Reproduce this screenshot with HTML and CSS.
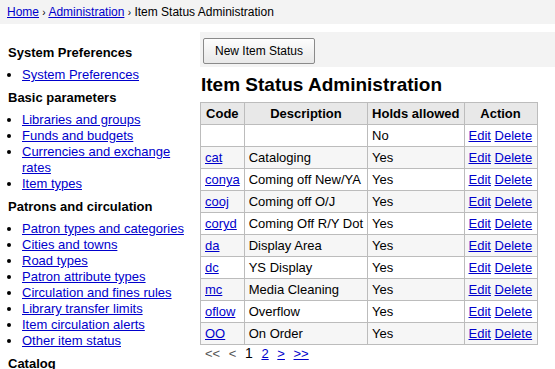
FILE: index.html
```html
<!DOCTYPE html>
<html lang="en">
<head>
    <meta charset="UTF-8">
    <title>Koha &rsaquo; Administration &rsaquo; Item Status Administration</title>
    <link rel="stylesheet" href="styles.css">
</head>
<body>
    <div id="breadcrumbs">
        <a href="#">Home</a> <span class="sep">&rsaquo;</span> <a href="#">Administration</a> <span class="sep">&rsaquo;</span> Item Status Administration
    </div>

    <div class="layout">
        <div class="sidebar">
            <h5>System Preferences</h5>
            <ul>
                <li><a href="#">System Preferences</a></li>
            </ul>
            <h5>Basic parameters</h5>
            <ul>
                <li><a href="#">Libraries and groups</a></li>
                <li><a href="#">Funds and budgets</a></li>
                <li><a href="#">Currencies and exchange rates</a></li>
                <li><a href="#">Item types</a></li>
            </ul>
            <h5>Patrons and circulation</h5>
            <ul>
                <li><a href="#">Patron types and categories</a></li>
                <li><a href="#">Cities and towns</a></li>
                <li><a href="#">Road types</a></li>
                <li><a href="#">Patron attribute types</a></li>
                <li><a href="#">Circulation and fines rules</a></li>
                <li><a href="#">Library transfer limits</a></li>
                <li><a href="#">Item circulation alerts</a></li>
                <li><a href="#">Other item status</a></li>
            </ul>
            <h5>Catalog</h5>
        </div>

        <div class="main">
            <div id="toolbar">
                <button class="new-btn">New Item Status</button>
            </div>

            <h1>Item Status Administration</h1>

            <table class="status-table">
                <tr>
                    <th class="col-code">Code</th>
                    <th class="col-desc">Description</th>
                    <th class="col-holds">Holds allowed</th>
                    <th class="col-action">Action</th>
                </tr>
                <tr>
                    <td></td>
                    <td></td>
                    <td>No</td>
                    <td><a href="#">Edit</a> <a href="#">Delete</a></td>
                </tr>
                <tr class="highlight">
                    <td><a href="#">cat</a></td>
                    <td>Cataloging</td>
                    <td>Yes</td>
                    <td><a href="#">Edit</a> <a href="#">Delete</a></td>
                </tr>
                <tr>
                    <td><a href="#">conya</a></td>
                    <td>Coming off New/YA</td>
                    <td>Yes</td>
                    <td><a href="#">Edit</a> <a href="#">Delete</a></td>
                </tr>
                <tr class="highlight">
                    <td><a href="#">cooj</a></td>
                    <td>Coming off O/J</td>
                    <td>Yes</td>
                    <td><a href="#">Edit</a> <a href="#">Delete</a></td>
                </tr>
                <tr>
                    <td><a href="#">coryd</a></td>
                    <td>Coming Off R/Y Dot</td>
                    <td>Yes</td>
                    <td><a href="#">Edit</a> <a href="#">Delete</a></td>
                </tr>
                <tr class="highlight">
                    <td><a href="#">da</a></td>
                    <td>Display Area</td>
                    <td>Yes</td>
                    <td><a href="#">Edit</a> <a href="#">Delete</a></td>
                </tr>
                <tr>
                    <td><a href="#">dc</a></td>
                    <td>YS Display</td>
                    <td>Yes</td>
                    <td><a href="#">Edit</a> <a href="#">Delete</a></td>
                </tr>
                <tr class="highlight">
                    <td><a href="#">mc</a></td>
                    <td>Media Cleaning</td>
                    <td>Yes</td>
                    <td><a href="#">Edit</a> <a href="#">Delete</a></td>
                </tr>
                <tr>
                    <td><a href="#">oflow</a></td>
                    <td>Overflow</td>
                    <td>Yes</td>
                    <td><a href="#">Edit</a> <a href="#">Delete</a></td>
                </tr>
                <tr class="highlight">
                    <td><a href="#">OO</a></td>
                    <td>On Order</td>
                    <td>Yes</td>
                    <td><a href="#">Edit</a> <a href="#">Delete</a></td>
                </tr>
            </table>

            <div class="pages">
                <span class="off">&lt;&lt;</span>
                <span class="off">&lt;</span>
                <span class="current">1</span>
                <a href="#">2</a>
                <a href="#">&gt;</a>
                <a href="#">&gt;&gt;</a>
            </div>
        </div>
    </div>
</body>
</html>
```

FILE: styles.css
```css
body {
    margin: 0;
    font-family: "Liberation Sans", Arial, sans-serif;
    font-size: 13px;
    line-height: 16px;
    color: #000;
    background-color: #fff;
}
a {
    color: #0000cc;
}
#breadcrumbs {
    height: 24px;
    padding: 0 7px;
    font-size: 12px;
    line-height: 25px;
    background-color: #f3f3f3;
}
#breadcrumbs .sep {
    font-size: 10px;
}
.layout {
    display: flex;
}
.sidebar {
    width: 182px;
    padding: 14px 0 0 8px;
    flex-shrink: 0;
}
.sidebar h5 {
    margin: 7px 0 6px 0;
    font-size: 13px;
    line-height: 16px;
}
.sidebar ul {
    margin: 0;
    padding-left: 14px;
}
.main {
    flex: 1;
    padding: 8px 0 0 10px;
}
#toolbar {
    padding: 6px 3px 3px 3px;
    background-color: #f3f3f3;
}
.new-btn {
    height: 26px;
    padding: 0 11px;
    font-family: "Liberation Sans", Arial, sans-serif;
    font-size: 12px;
    color: #000;
    background: linear-gradient(#fdfdfd, #e8e8e8);
    border: 1px solid #8a8a8a;
    border-radius: 2px;
}
h1 {
    margin: 7px 0 6px 1px;
    font-size: 19px;
    line-height: 22px;
}
.status-table {
    border-collapse: collapse;
}
.status-table th, .status-table td {
    padding: 3px 4px;
    line-height: 15px;
    border: 1px solid #bcbcbc;
    text-align: left;
    white-space: nowrap;
}
.status-table th {
    text-align: center;
    background-color: #e8e8e8;
}
.status-table .col-desc {
    width: 113px;
}
.status-table .col-action {
    width: 64px;
}
.status-table tr.highlight td {
    background-color: #f6f6f6;
}
.pages {
    padding: 0 5px;
    color: #555;
}
.pages span, .pages a {
    margin-right: 5px;
}
.pages .current {
    color: #000;
    font-size: 14px;
}
```
